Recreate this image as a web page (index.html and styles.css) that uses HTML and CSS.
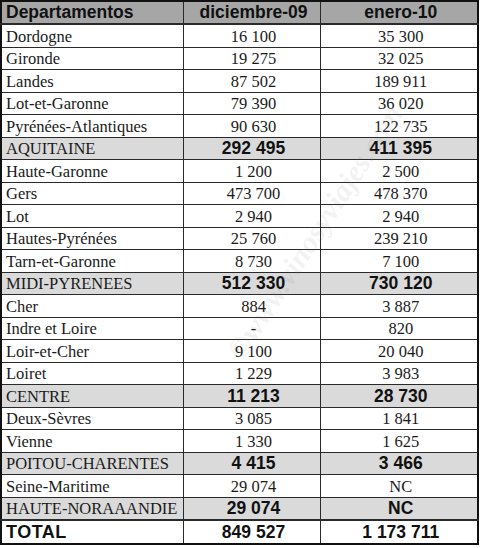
FILE: index.html
```html
<!DOCTYPE html>
<html lang="es">
<head>
    <meta charset="UTF-8">
    <title>Departamentos</title>
    <link rel="stylesheet" href="styles.css">
</head>
<body>
    <div class="wrap">
        <table class="data">
            <colgroup>
                <col class="c-name">
                <col class="c-val">
                <col class="c-val2">
            </colgroup>
            <thead>
                <tr class="head">
                    <th class="left">Departamentos</th>
                    <th>diciembre-09</th>
                    <th>enero-10</th>
                </tr>
            </thead>
            <tbody>
                <tr><td class="name">Dordogne</td><td>16 100</td><td>35 300</td></tr>
                <tr><td class="name">Gironde</td><td>19 275</td><td>32 025</td></tr>
                <tr><td class="name">Landes</td><td>87 502</td><td>189 911</td></tr>
                <tr><td class="name">Lot-et-Garonne</td><td>79 390</td><td>36 020</td></tr>
                <tr><td class="name">Pyrénées-Atlantiques</td><td>90 630</td><td>122 735</td></tr>
                <tr class="region"><td class="name">AQUITAINE</td><td>292 495</td><td>411 395</td></tr>
                <tr><td class="name">Haute-Garonne</td><td>1 200</td><td>2 500</td></tr>
                <tr><td class="name">Gers</td><td>473 700</td><td>478 370</td></tr>
                <tr><td class="name">Lot</td><td>2 940</td><td>2 940</td></tr>
                <tr><td class="name">Hautes-Pyrénées</td><td>25 760</td><td>239 210</td></tr>
                <tr><td class="name">Tarn-et-Garonne</td><td>8 730</td><td>7 100</td></tr>
                <tr class="region"><td class="name">MIDI-PYRENEES</td><td>512 330</td><td>730 120</td></tr>
                <tr><td class="name">Cher</td><td>884</td><td>3 887</td></tr>
                <tr><td class="name">Indre et Loire</td><td>-</td><td>820</td></tr>
                <tr><td class="name">Loir-et-Cher</td><td>9 100</td><td>20 040</td></tr>
                <tr><td class="name">Loiret</td><td>1 229</td><td>3 983</td></tr>
                <tr class="region"><td class="name">CENTRE</td><td>11 213</td><td>28 730</td></tr>
                <tr><td class="name">Deux-Sèvres</td><td>3 085</td><td>1 841</td></tr>
                <tr><td class="name">Vienne</td><td>1 330</td><td>1 625</td></tr>
                <tr class="region"><td class="name">POITOU-CHARENTES</td><td>4 415</td><td>3 466</td></tr>
                <tr><td class="name">Seine-Maritime</td><td>29 074</td><td>NC</td></tr>
                <tr class="region"><td class="name">HAUTE-NORAAANDIE</td><td>29 074</td><td>NC</td></tr>
                <tr class="total"><td class="name">TOTAL</td><td>849 527</td><td>1 173 711</td></tr>
            </tbody>
        </table>
        <div class="watermark">©www.vinosyviajes.com</div>
    </div>
</body>
</html>
```

FILE: styles.css
```css
body {
    margin: 0;
    background-color: white;
}
.wrap {
    position: relative;
    width: 480px;
    height: 548px;
    overflow: hidden;
}
.data {
    border-collapse: collapse;
    width: 477px;
    table-layout: fixed;
    border: 2px solid #111;
}
.c-name {
    width: 182px;
}
.c-val {
    width: 137px;
}
.c-val2 {
    width: 158px;
}
.data th,
.data td {
    border: 1px solid #2a2a2a;
    padding: 0 0 0 4px;
    text-align: center;
    white-space: nowrap;
    overflow: hidden;
    line-height: 19px;
}
.head th {
    height: 21px;
    background-color: #a6a6a6;
    font-family: "Liberation Sans", Arial, sans-serif;
    font-size: 17.5px;
    font-weight: bold;
    color: #111;
    border-bottom-width: 2px;
}
.data th.left {
    text-align: left;
}
.data td {
    height: 20.5px;
    font-family: "Liberation Serif", "Times New Roman", serif;
    font-size: 16.5px;
    color: #1a1a1a;
    padding-top: 1px;
}
.data td.name {
    text-align: left;
    padding-left: 4px;
}
.region td {
    background-color: #dadada;
}
.region td:not(.name),
.total td {
    font-family: "Liberation Sans", Arial, sans-serif;
    font-size: 17.5px;
    font-weight: bold;
    color: #111;
}
.total td {
    border-top-width: 2px;
}
.total td.name {
    font-size: 18px;
    letter-spacing: 0.5px;
}
.watermark {
    position: absolute;
    left: 150px;
    top: 215px;
    width: 330px;
    text-align: center;
    transform: rotate(-57deg);
    font-family: "Liberation Serif", serif;
    font-size: 30px;
    font-weight: bold;
    font-style: italic;
    color: rgba(120, 120, 120, 0.1);
    pointer-events: none;
}
```
